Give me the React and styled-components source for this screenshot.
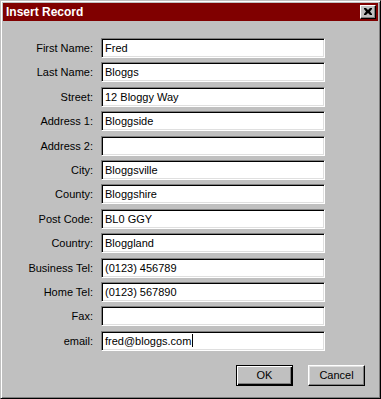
import React from "react"
import styled, { createGlobalStyle } from "styled-components"

const GlobalStyle = createGlobalStyle`
    html, body {
        margin: 0;
        padding: 0;
        background: #c0c0c0;
    }
`

const campos = [
    { label: "First Name:", valor: "Fred" },
    { label: "Last Name:", valor: "Bloggs" },
    { label: "Street:", valor: "12 Bloggy Way" },
    { label: "Address 1:", valor: "Bloggside" },
    { label: "Address 2:", valor: "" },
    { label: "City:", valor: "Bloggsville" },
    { label: "County:", valor: "Bloggshire" },
    { label: "Post Code:", valor: "BL0 GGY" },
    { label: "Country:", valor: "Bloggland" },
    { label: "Business Tel:", valor: "(0123) 456789" },
    { label: "Home Tel:", valor: "(0123) 567890" },
    { label: "Fax:", valor: "" },
    { label: "email:", valor: "fred@bloggs.com", cursor: true },
]

export default function App() {
    return (
        <>
            <GlobalStyle />
            <Janela>
                <BarraTitulo>
                    <span>Insert Record</span>
                    <BotaoFechar>
                        <svg width="8" height="7" viewBox="0 0 8 7">
                            <path d="M0 0h2l2 2 2-2h2v1L6 3.5 8 6v1H6L4 5 2 7H0V6l2-2.5L0 1z" fill="#000" />
                        </svg>
                    </BotaoFechar>
                </BarraTitulo>
                <Conteudo>
                    <Formulario>
                        {campos.map((c) => (
                            <React.Fragment key={c.label}>
                                <Rotulo>{c.label}</Rotulo>
                                <Campo>
                                    {c.valor}
                                    {c.cursor && <Cursor />}
                                </Campo>
                            </React.Fragment>
                        ))}
                    </Formulario>
                    <Rodape>
                        <Botao padrao>OK</Botao>
                        <Botao>Cancel</Botao>
                    </Rodape>
                </Conteudo>
            </Janela>
        </>
    )
}

const Janela = styled.div`
    box-sizing: border-box;
    width: 381px;
    height: 399px;
    background: #c0c0c0;
    border-top: 1px solid #c0c0c0;
    border-left: 1px solid #c0c0c0;
    border-right: 1px solid #000000;
    border-bottom: 1px solid #000000;
    box-shadow: inset 1px 1px 0 #ffffff, inset -1px -1px 0 #808080;
    padding: 2px;
    display: flex;
    flex-direction: column;
    font-family: 'Liberation Sans', Arial, sans-serif;
    font-size: 11px;
    color: #000000;
`

const BarraTitulo = styled.div`
    height: 18px;
    background: #800000;
    display: flex;
    align-items: center;
    justify-content: space-between;
    padding: 0 2px 0 3px;
    color: #ffffff;
    font-weight: bold;
    font-size: 12px;
`

const BotaoFechar = styled.div`
    box-sizing: border-box;
    width: 16px;
    height: 14px;
    background: #c0c0c0;
    border-top: 1px solid #ffffff;
    border-left: 1px solid #ffffff;
    border-right: 1px solid #000000;
    border-bottom: 1px solid #000000;
    box-shadow: inset -1px -1px 0 #808080;
    display: flex;
    align-items: center;
    justify-content: center;
    padding-bottom: 1px;
`

const Conteudo = styled.div`
    flex: 1;
    display: flex;
    flex-direction: column;
    padding: 17px 13px 0 0;
`

const Formulario = styled.div`
    display: grid;
    grid-template-columns: 90px 224px;
    column-gap: 8px;
    row-gap: 4.4px;
    align-items: center;
`

const Rotulo = styled.div`
    text-align: right;
    white-space: nowrap;
`

const Campo = styled.div`
    box-sizing: border-box;
    height: 20px;
    background: #ffffff;
    border-top: 1px solid #808080;
    border-left: 1px solid #808080;
    border-right: 1px solid #ffffff;
    border-bottom: 1px solid #ffffff;
    box-shadow: inset 1px 1px 0 #000000, inset -1px -1px 0 #dfdfdf;
    padding: 0 3px;
    display: flex;
    align-items: center;
    font-size: 11px;
    white-space: nowrap;
`

const Cursor = styled.span`
    display: inline-block;
    width: 1px;
    height: 13px;
    background: #000000;
    margin-left: 1px;
`

const Rodape = styled.div`
    display: flex;
    justify-content: flex-end;
    gap: 15px;
    margin-top: 14px;
`

const Botao = styled.div`
    box-sizing: border-box;
    width: 57px;
    height: 21px;
    background: #c0c0c0;
    display: flex;
    align-items: center;
    justify-content: center;
    border: 1px solid ${(p) => (p.padrao ? "#000000" : "transparent")};
    box-shadow: ${(p) =>
        p.padrao
            ? "inset 1px 1px 0 #ffffff, inset -1px -1px 0 #000000, inset -2px -2px 0 #808080"
            : "inset 1px 1px 0 #ffffff, inset -1px -1px 0 #000000, inset -2px -2px 0 #808080"};
    ${(p) => !p.padrao && "border-top-color: #ffffff; border-left-color: #ffffff; border-right-color: #000000; border-bottom-color: #000000; box-shadow: inset -1px -1px 0 #808080, inset 1px 1px 0 #dfdfdf;"}
`
